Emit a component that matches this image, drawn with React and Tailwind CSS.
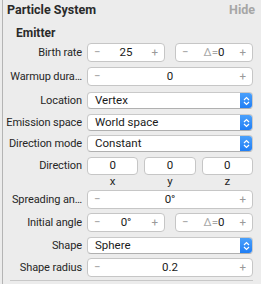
const FONT = { fontFamily: 'Roboto, "Liberation Sans", sans-serif' };

function Label({ children }) {
  return (
    <div className="w-[79px] shrink-0 whitespace-nowrap text-right text-[11px] leading-[19px] tracking-[-0.1px] text-[#262626]">
      {children}
    </div>
  );
}

function Stepper({ value, delta, className = '' }) {
  return (
    <div
      className={`flex h-[19px] items-center justify-between rounded-[4px] border border-[#c6c6c6] bg-white px-[6px] text-[11.5px] ${className}`}
    >
      <span className="text-[#9a9a9a]">−</span>
      <span className="text-[#1a1a1a]">
        {delta ? (
          <>
            <span className="text-[#a8a8a8]">Δ=</span>0
          </>
        ) : (
          value
        )}
      </span>
      <span className="text-[#9a9a9a]">+</span>
    </div>
  );
}

function Popup({ value }) {
  return (
    <div className="flex h-[17px] w-[166px] items-stretch overflow-hidden rounded-[4px] border border-[#c9c9c9] border-b-[#b0b0b0] bg-white text-[11.5px] text-[#1a1a1a]">
      <div className="flex flex-1 items-center pl-[7px]">{value}</div>
      <div className="flex w-[12px] items-center justify-center bg-gradient-to-b from-[#4aa0fb] to-[#1f7ef5]">
        <svg width="7" height="10" viewBox="0 0 7 10" fill="none" stroke="white" strokeWidth="1.2">
          <path d="M1 4 L3.5 1.5 L6 4" />
          <path d="M1 6 L3.5 8.5 L6 6" />
        </svg>
      </div>
    </div>
  );
}

function Row({ label, children, className = '' }) {
  return (
    <div className={`flex h-[19px] items-center gap-[5px] ${className}`}>
      <Label>{label}</Label>
      {children}
    </div>
  );
}

export default function App() {
  return (
    <div className="h-[284px] w-[261px] overflow-hidden bg-[#ececec]" style={FONT}>
      <div className="ml-[2px] h-full border-l border-[#b4b4b4]">
        <div className="flex h-[20px] items-center justify-between pl-[4px] pr-[6px] text-[12.5px] font-bold">
          <span className="text-[#2a2a2a]">Particle System</span>
          <span className="text-[#a6a6a6]">Hide</span>
        </div>
        <div className="mt-[5px] flex h-[16px] items-center pl-[13px] text-[12px] font-bold text-[#2a2a2a]">
          Emitter
        </div>

        <div className="mt-[2px] flex flex-col">
          <Row label="Birth rate">
            <Stepper value="25" className="w-[78px]" />
            <Stepper delta className="ml-[5px] w-[78px]" />
          </Row>
          <Row label="Warmup dura…" className="mt-[5px]">
            <Stepper value="0" className="w-[166px]" />
          </Row>
          <Row label="Location" className="mt-[5px]">
            <Popup value="Vertex" />
          </Row>
          <Row label="Emission space" className="mt-[3px]">
            <Popup value="World space" />
          </Row>
          <Row label="Direction mode" className="mt-[2px]">
            <Popup value="Constant" />
          </Row>
          <Row label="Direction" className="mt-[3px]">
            <div className="flex w-[166px] gap-[6px]">
              {['0', '0', '0'].map((v, i) => (
                <div
                  key={i}
                  className="flex h-[18px] flex-1 items-center justify-center rounded-[4px] border border-[#c6c6c6] bg-white text-[11.5px] text-[#1a1a1a]"
                >
                  {v}
                </div>
              ))}
            </div>
          </Row>
          <div className="ml-[84px] flex h-[13px] w-[166px] gap-[6px] text-[11.5px] leading-[13px] text-[#262626]">
            <span className="flex-1 text-center">x</span>
            <span className="flex-1 text-center">y</span>
            <span className="flex-1 text-center">z</span>
          </div>
          <Row label="Spreading an…" className="mt-[2px]">
            <Stepper value="0°" className="w-[166px]" />
          </Row>
          <Row label="Initial angle" className="mt-[4px]">
            <Stepper value="0°" className="w-[78px]" />
            <Stepper delta className="ml-[5px] w-[78px]" />
          </Row>
          <Row label="Shape" className="mt-[4px]">
            <Popup value="Sphere" />
          </Row>
          <Row label="Shape radius" className="mt-[3px]">
            <Stepper value="0.2" className="w-[166px]" />
          </Row>
        </div>
        <div className="ml-[7px] mt-[3px] h-px w-[243px] bg-[#c8c8c8]" />
      </div>
    </div>
  );
}
